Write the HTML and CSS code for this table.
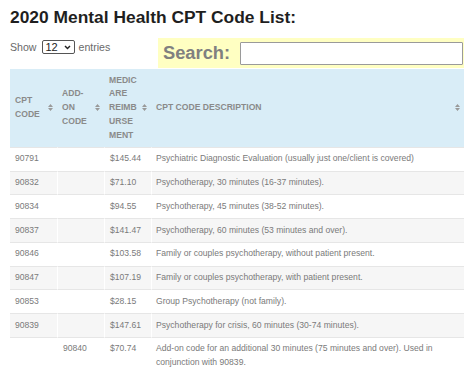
FILE: index.html
```html
<!DOCTYPE html>
<html lang="en">
<head>
<meta charset="utf-8">
<title>2020 Mental Health CPT Code List</title>
<link rel="stylesheet" href="styles.css">
</head>
<body>
<h1 class="title">2020 Mental Health CPT Code List:</h1>
<div class="toolbar">
  <div class="length">
    <span>Show</span>
    <span class="select"><span class="select-val">12</span><svg class="chev" width="7" height="5" viewBox="0 0 7 5"><path d="M1 1 L3.5 3.6 L6 1" fill="none" stroke="#222" stroke-width="1.4"/></svg></span>
    <span>entries</span>
  </div>
  <label class="search"><span class="search-label">Search:</span><span class="search-input"></span></label>
</div>
<table class="codes">
  <colgroup><col class="c1"><col class="c2"><col class="c3"><col class="c4"></colgroup>
  <thead>
    <tr>
      <th><div class="th-in"><span>CPT<br>CODE</span><svg class="sort" width="5" height="7" viewBox="0 0 5 7"><path d="M0 3 L2.5 0 L5 3Z M0 4 L2.5 7 L5 4Z" fill="#9a9a9a"/></svg></div></th>
      <th><div class="th-in"><span>ADD-<br>ON<br>CODE</span><svg class="sort" width="5" height="7" viewBox="0 0 5 7"><path d="M0 3 L2.5 0 L5 3Z M0 4 L2.5 7 L5 4Z" fill="#9a9a9a"/></svg></div></th>
      <th><div class="th-in"><span>MEDIC<br>ARE<br>REIMB<br>URSE<br>MENT</span><svg class="sort" width="5" height="7" viewBox="0 0 5 7"><path d="M0 3 L2.5 0 L5 3Z M0 4 L2.5 7 L5 4Z" fill="#9a9a9a"/></svg></div></th>
      <th><div class="th-in"><span>CPT CODE DESCRIPTION</span><svg class="sort" width="5" height="7" viewBox="0 0 5 7"><path d="M0 3 L2.5 0 L5 3Z M0 4 L2.5 7 L5 4Z" fill="#9a9a9a"/></svg></div></th>
    </tr>
  </thead>
  <tbody>
    <tr><td>90791</td><td></td><td>$145.44</td><td>Psychiatric Diagnostic Evaluation (usually just one/client is covered)</td></tr>
    <tr class="odd"><td>90832</td><td></td><td>$71.10</td><td>Psychotherapy, 30 minutes (16-37 minutes).</td></tr>
    <tr><td>90834</td><td></td><td>$94.55</td><td>Psychotherapy, 45 minutes (38-52 minutes).</td></tr>
    <tr class="odd"><td>90837</td><td></td><td>$141.47</td><td>Psychotherapy, 60 minutes (53 minutes and over).</td></tr>
    <tr><td>90846</td><td></td><td>$103.58</td><td>Family or couples psychotherapy, without patient present.</td></tr>
    <tr class="odd"><td>90847</td><td></td><td>$107.19</td><td>Family or couples psychotherapy, with patient present.</td></tr>
    <tr><td>90853</td><td></td><td>$28.15</td><td>Group Psychotherapy (not family).</td></tr>
    <tr class="odd"><td>90839</td><td></td><td>$147.61</td><td>Psychotherapy for crisis, 60 minutes (30-74 minutes).</td></tr>
    <tr><td></td><td>90840</td><td>$70.74</td><td>Add-on code for an additional 30 minutes (75 minutes and over). Used in conjunction with 90839.</td></tr>
  </tbody>
</table>
</body>
</html>
```
FILE: styles.css
```css
html, body {
  margin: 0;
  background: #fff;
}
body {
  padding: 7px 10px 0 10px;
  font-family: "Liberation Sans", Arial, sans-serif;
  color: #777;
}
.title {
  margin: 0;
  font-size: 17.4px;
  line-height: 20px;
  font-weight: bold;
  color: #1f1f1f;
}
.toolbar {
  display: flex;
  justify-content: space-between;
  align-items: flex-start;
  margin-top: 11px;
}
.length {
  display: flex;
  align-items: center;
  margin-top: 2px;
  font-size: 10.6px;
  color: #6a6a6a;
  line-height: 14px;
}
.select {
  display: inline-flex;
  align-items: center;
  justify-content: space-between;
  box-sizing: border-box;
  width: 33px;
  height: 14px;
  margin: 0 4px 0 5px;
  padding: 0 3px 0 3px;
  border: 1px solid #555;
  border-radius: 2px;
  background: #fff;
}
.select-val {
  font-size: 11px;
  color: #222;
}
.chev {
  display: block;
}
.search {
  display: flex;
  align-items: center;
  width: 306px;
  box-sizing: border-box;
  padding: 3.5px 1px 3px 5px;
  background: #ffffc2;
}
.search-label {
  font-size: 18.3px;
  font-weight: bold;
  color: #808080;
  line-height: 22px;
  width: 77px;
}
.search-input {
  flex: 1;
  height: 23px;
  box-sizing: border-box;
  border: 1px solid #9a9a9a;
  border-radius: 1px;
  background: #fff;
}
.codes {
  width: 454px;
  margin-top: 1px;
  table-layout: fixed;
  border-collapse: separate;
  border-spacing: 0;
}
.c1, .c2, .c3 { width: 47px; }
.c4 { width: 313px; }
.codes th {
  background: #d9edf7;
  padding: 5px 4px 4.7px 5px;
  font-size: 8.6px;
  line-height: 13.75px;
  font-weight: bold;
  color: #8a8a8a;
  text-align: left;
  vertical-align: middle;
}
.th-in {
  display: flex;
  align-items: center;
  justify-content: space-between;
}
.sort {
  display: block;
  flex: none;
}
.codes td {
  padding: 4.5px 5px;
  font-size: 8.6px;
  line-height: 13.75px;
  color: #7a7a7a;
  border-top: 1px solid #e6e6e6;
  border-left: 1px solid #fff;
  vertical-align: top;
}
.codes td:first-child {
  border-left: none;
}
.codes td:last-child {
  padding-left: 4px;
}
.codes tr.odd td {
  background: #f6f6f6;
}
```
